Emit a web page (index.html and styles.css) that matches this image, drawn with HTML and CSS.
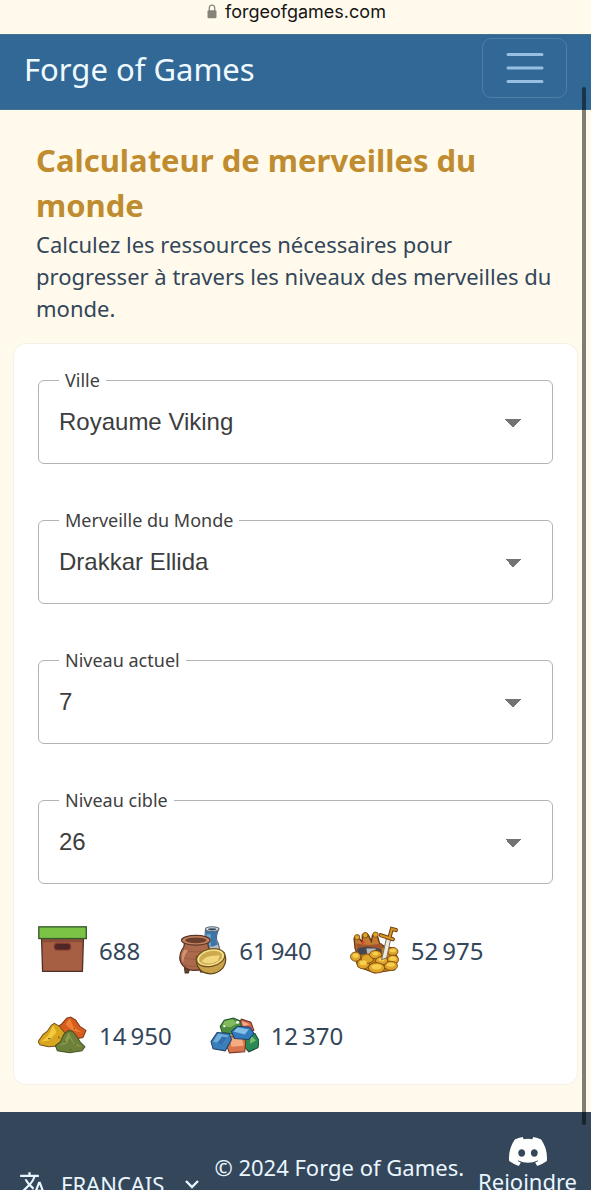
FILE: index.html
```html
<!DOCTYPE html>
<html lang="fr">
<head>
<meta charset="utf-8">
<meta name="viewport" content="width=device-width, initial-scale=1">
<title>Forge of Games</title>
<link rel="stylesheet" href="styles.css">
</head>
<body>
<div class="app">
  <div class="address">
    <svg class="lock" viewBox="0 0 10 15" aria-hidden="true"><path d="M2.3 7V4a2.7 2.9 0 0 1 5.400 0v3" fill="none" stroke="#8b8980" stroke-width="1.300"/><rect x="0.500" y="6.300" width="9" height="8" rx="1.300" fill="#858379"/></svg>
    <span>forgeofgames.com</span>
  </div>
  <header class="navbar">
    <a class="brand" href="#">Forge of Games</a>
    <button class="toggler" type="button" aria-label="Menu">
      <svg viewBox="0 0 38 30" aria-hidden="true"><path d="M2 1.500h34M2 15h34M2 28.500h34" fill="none" stroke="#98bfe2" stroke-width="3" stroke-linecap="round"/></svg>
    </button>
  </header>
  <main class="main">
    <div class="intro">
      <h1>Calculateur de merveilles du monde</h1>
      <p>Calculez les ressources nécessaires pour progresser à travers les niveaux des merveilles du monde.</p>
    </div>
    <section class="card">
      <form class="fields">
        <fieldset class="field"><legend><label for="city">Ville</label></legend><select id="city"><option>Royaume Viking</option></select></fieldset>
        <fieldset class="field"><legend><label for="wonder">Merveille du Monde</label></legend><select id="wonder"><option>Drakkar Ellida</option></select></fieldset>
        <fieldset class="field"><legend><label for="current">Niveau actuel</label></legend><select id="current"><option>7</option></select></fieldset>
        <fieldset class="field"><legend><label for="target">Niveau cible</label></legend><select id="target"><option>26</option></select></fieldset>
      </form>
      <ul class="costs">
        <li>
          <svg viewBox="0 0 48 48" aria-hidden="true"><path d="M3.500 12h41l-1 32.500h-39z" fill="#a65f43" stroke="#513029" stroke-width="1.300"/><path d="M4 13h40v3H4z" fill="#8b4c39"/><rect x=".8" y=".8" width="46.500" height="11.500" fill="#7bc345" stroke="#35552c" stroke-width="1.300"/><rect x="16" y="17" width="16" height="6.500" rx="3.200" fill="#4f2525" stroke="#813c32" stroke-width="1.200"/></svg>
          <span>688</span>
        </li>
        <li>
          <svg viewBox="0 0 48 48" aria-hidden="true">
            <path d="M27 3q-1 7 0 11-5 6-3 17 9 6 16-1 2-9-2-16-1-5 2-11z" fill="#b6bcc0" stroke="#5a5960"/><path d="M27 4q0 5 1 8-3 3-3 7 7 3 14-1l-2-5 2-9z" fill="#3b76ab"/><path d="M28 8h4v12h-4z" fill="#6fa7cf"/><ellipse cx="33.500" cy="3" rx="6.500" ry="2.300" fill="#d6dfe3" stroke="#5a6875"/><ellipse cx="33.500" cy="3.300" rx="4" ry="1" fill="#374758"/>
            <path d="m6 38 1 8h3l2-5m9 0 1 4h3v-6" fill="#68432f" stroke="#49301f"/><path d="M6 15q1 5-2 8-5 9 1 16 7 7 20 3 11-6 7-18-4-4-2-10z" fill="#ad694c" stroke="#553224" stroke-width="1.200"/><path d="M4 23q13 5 27 0M2 30q14 5 30 0M5 38q12 4 23-1" stroke="#985a40" fill="none"/><path d="M6 23q-4 7-1 13 1-8 5-12z" fill="#d09372"/><ellipse cx="17.500" cy="14" rx="14" ry="4.800" fill="#c68360" stroke="#583525" stroke-width="1.200"/><ellipse cx="17.500" cy="14" rx="10.500" ry="2.800" fill="#6a3f2d"/>
            <path d="M18 30q-1 10 6 15 12 5 20-4 5-7 1-15z" fill="#c9a24a" stroke="#604719" stroke-width="1.200"/><ellipse cx="32" cy="31" rx="14" ry="8.500" transform="rotate(-13 32 31)" fill="#f5e08b" stroke="#6f541d" stroke-width="1.200"/><ellipse cx="32" cy="31" rx="11.500" ry="6.500" transform="rotate(-13 32 31)" fill="#cda94e"/><path d="M23 35q4-7 18-6l-2 5q-8 5-16 1" fill="#f1d87f"/>
          </svg>
          <span>61&#8239;940</span>
        </li>
        <li>
          <svg viewBox="0 0 48 48" aria-hidden="true">
            <path d="m5 22-1-10q3-4 5 0l3 4V9q3-4 6 0l3 6 1-6q3-3 5 1l2 7 8 5v13L11 38z" fill="#c17b32" stroke="#633410" stroke-width="1.300"/>
            <path d="M3 27 10 24l26-4 7 2 4 10-3 11-20 3-16-6z" fill="#c17f1c" stroke="#6e3f0d"/>
            <path d="M6 17q13 3 25 0v8q-14-3-24 1z" fill="#a3542d"/><path d="M7 22q11-4 24 1v5q-12-3-22 1z" fill="#464650"/><path d="m16 22 9 0v5l-8 1z" fill="#b9babb"/>
            <g fill="#dfa42a" stroke="#7d4b10" stroke-width=".9"><circle cx="7" cy="11" r="2.600"/><circle cx="15" cy="9" r="2.600"/><circle cx="25" cy="8.500" r="2.600"/><ellipse cx="5.500" cy="30" rx="5" ry="4.500"/><ellipse cx="42" cy="25" rx="5" ry="4"/><ellipse cx="42" cy="33" rx="5.500" ry="4.500"/><ellipse cx="13" cy="37" rx="6" ry="5"/><ellipse cx="40" cy="39" rx="6.500" ry="4.500"/><ellipse cx="17" cy="32" rx="6" ry="4.500"/><ellipse cx="25" cy="28" rx="6" ry="4"/><ellipse cx="31" cy="34" rx="6" ry="4"/><ellipse cx="26" cy="41" rx="8" ry="5"/></g>
            <g fill="#f7cf4c"><ellipse cx="5.500" cy="29" rx="3" ry="2.300"/><ellipse cx="42" cy="32" rx="3.500" ry="2.200"/><ellipse cx="13" cy="36" rx="3.500" ry="2.500"/><ellipse cx="26" cy="40" rx="5" ry="2.500"/><ellipse cx="40" cy="38" rx="4" ry="2"/><ellipse cx="25" cy="27" rx="3" ry="1.800"/><ellipse cx="31" cy="33" rx="3" ry="1.700"/><ellipse cx="42" cy="24" rx="3" ry="1.800"/></g><circle cx="13" cy="16" r="1.500" fill="#e84235"/>
            <path d="m36 11 4 1-4 19-5 2z" fill="#eceae1" stroke="#7f7160"/><path d="m30 9 12 4M39 10l2-7 4 1" fill="none" stroke="#70400f" stroke-width="4" stroke-linecap="round"/><path d="m30 9 12 4M39 10l2-7 4 1" fill="none" stroke="#d99624" stroke-width="2" stroke-linecap="round"/>
          </svg>
          <span>52&#8239;975</span>
        </li>
        <li>
          <svg viewBox="0 0 48 48" aria-hidden="true">
            <path d="m17 17 6-4 5-6 4-1 5 3 4 6 6 4-3 7-16 3z" fill="#d75c20" stroke="#7e3918"/><path d="m31 7 4 9 8 5-9-2-7-6z" fill="#ef8133"/><path d="m0 30 5-7 4-3 4-6 3-2 5 3 5 6 4 9-7 4-13 1-8-2z" fill="#d9a51e" stroke="#79541b"/><path d="m15 14-5 10-7 6 8-1 7-8z" fill="#f4c83d"/><path d="m17 34 5-4 3-7 5-4 4 1 4 5 3 5 5 5-3 4-12 2-12-2z" fill="#6d803a" stroke="#465226"/><path d="m30 21-5 10-5 3 8-2 3-6 5 8 7 1-8-4z" fill="#8b9d4e"/><path d="m26 29 1 2m9 1 1 2m-6 4h2M10 27h2m8-2 1 2m14-10 1 1" stroke="#6a5e23" stroke-width="1.200"/>
          </svg>
          <span>14&#8239;950</span>
        </li>
        <li>
          <svg viewBox="0 0 48 48" aria-hidden="true">
            <path d="m27 12 4-4 9 3 3 8-7 4-10-5z" fill="#db6448" stroke="#693029"/><path d="m31 10 8 3-6 2z" fill="#f2ac8d"/><path d="m10 15 4-6 9-2 7 3 1 8-8 5-11-2z" fill="#4e8f3f" stroke="#23542b"/><path d="m14 10 8-2 5 4-7 4-8-1z" fill="#82bb5d"/><path d="m38 22 6 0 4 7-1 7-9 4-6-7z" fill="#2b8955" stroke="#194b35"/><path d="m40 24 5 5-6 3z" fill="#79bd6d"/><path d="m18 25 14-2 3 7-1 10-15 1-3-8z" fill="#d9744d" stroke="#743722"/><path d="m20 27 11-1 2 8-12 1z" fill="#f4ac80"/><path d="m1 30 6-9 12 1 2 6-6 11-12-2z" fill="#397fbc" stroke="#214268"/><path d="m8 22 10 2-5 8-10-2z" fill="#72aedc"/><path d="m12 33 5-7-5-1-5 6z" fill="#346fac"/><path d="m21 20 6-5 12 1 4 6-5 6-14-1z" fill="#347cc0" stroke="#1c3f69"/><path d="m27 16 11 2-4 5-11-3z" fill="#83bfe5"/><circle cx="27" cy="11" r="1.500" fill="#fff"/><circle cx="14" cy="15" r="1" fill="#fff"/>
          </svg>
          <span>12&#8239;370</span>
        </li>
      </ul>
    </section>
  </main>
  <footer class="footer">
    <button class="language" type="button">
      <svg class="translate" viewBox="0 0 24 24" aria-hidden="true"><path fill="currentColor" d="m12.870 15.070-2.540-2.510.030-.030A17.520 17.520 0 0 0 14.070 6H17V4h-7V2H8v2H1v2h11.170C11.500 7.920 10.440 9.750 9 11.350 8.070 10.320 7.300 9.190 6.690 8h-2c.73 1.630 1.730 3.170 2.980 4.560l-5.090 5.020L4 19l5-5 3.110 3.110.76-2.040zM18.500 10h-2L12 22h2l1.120-3h4.750L21 22h2l-4.500-12zm-2.620 7 1.620-4.330L19.120 17h-3.240z"/></svg>
      <span>FRANÇAIS</span>
      <svg class="chevron" viewBox="0 0 16 10" aria-hidden="true"><path d="m2 2 6 6 6-6" fill="none" stroke="currentColor" stroke-width="2.400"/></svg>
    </button>
    <p class="copyright">© 2024 Forge of Games.</p>
    <a class="discord" href="#">
      <svg viewBox="0 0 127.140 96.360" aria-hidden="true"><path fill="#fff" d="M107.700 8.070A105.150 105.150 0 0 0 81.470 0a72.060 72.060 0 0 0-3.360 6.830 97.680 97.680 0 0 0-29.110 0A72.370 72.370 0 0 0 45.640 0a105.890 105.890 0 0 0-26.250 8.090C2.790 32.650-1.710 56.600.54 80.210a105.730 105.730 0 0 0 32.170 16.150 77.700 77.700 0 0 0 6.890-11.110 68.420 68.420 0 0 1-10.850-5.180c.91-.66 1.800-1.340 2.660-2a75.570 75.570 0 0 0 64.320 0c.87.71 1.760 1.390 2.660 2a68.680 68.680 0 0 1-10.870 5.190 77 77 0 0 0 6.890 11.100 105.250 105.250 0 0 0 32.190-16.140c2.640-27.380-4.510-51.110-18.900-72.150zM42.450 65.690C36.180 65.690 31 60 31 53s5-12.740 11.430-12.740S54 46 53.890 53s-5.050 12.690-11.440 12.690zm42.240 0C78.410 65.690 73.250 60 73.250 53s5-12.740 11.440-12.740S96.230 46 96.120 53s-5.040 12.690-11.430 12.690z"/></svg>
      <span>Rejoindre</span>
    </a>
  </footer>
  <div class="scroll-thumb"></div>
</div>
</body>
</html>
```
FILE: styles.css
```css
* { box-sizing: border-box; }
body {
  margin: 0;
  background: #fffaec;
  color: #33465a;
  font-family: "Noto Sans", sans-serif;
}
.app {
  position: relative;
  height: 100vh;
  overflow: hidden;
}
.address {
  display: flex;
  justify-content: center;
  gap: 8px;
  height: 34px;
  padding-left: 2px;
  color: #151515;
  font: 18px/24px Inter, sans-serif;
}
.lock { width: 10px; height: 15px; margin-top: 4px; }
.navbar {
  display: flex;
  align-items: flex-start;
  justify-content: space-between;
  height: 76px;
  padding: 3px 24px 0;
  background: #316896;
  border-top: 1px solid #44718e;
  border-bottom: 1px solid #44718e;
}
.brand {
  color: #eefaff;
  font-size: 31px;
  line-height: 62px;
  text-decoration: none;
}
.toggler {
  display: grid;
  place-items: center;
  width: 85px;
  height: 60px;
  padding: 0;
  border: 1px solid #4b7fa5;
  border-radius: 9px;
  background: none;
}
.toggler svg { width: 38px; height: 30px; }
.main { padding: 28px 14px; }
.intro { padding: 0 16px 0 22px; margin-bottom: 20px; }
h1 {
  margin: 0;
  color: #c08c30;
  font-size: 31px;
  line-height: 45px;
}
.intro p {
  margin: 0;
  font-size: 22px;
  line-height: 32px;
}
.card {
  padding: 24px 24px;
  border-radius: 12px;
  background: #fff;
  box-shadow: 0 0 0 1px #f5f1ea;
}
.fields { display: grid; gap: 44px; }
.field {
  min-width: 0;
  margin: 0;
  padding: 0 0 5px;
  border: 1px solid #b3b3b3;
  border-radius: 6px;
}
legend {
  margin-left: 20px;
  padding: 0 6px;
  color: #404040;
  font-size: 18px;
  line-height: 24px;
}
.field select {
  display: block;
  width: 100%;
  height: 66px;
  padding: 0 20px 6px;
  appearance: none;
  border: 0;
  border-radius: 6px;
  background: conic-gradient(from -45deg at 50% 100%, #737373 90deg, transparent 0) right 31px top 27px / 16px 8px no-repeat;
  color: #3d3d3d;
  font: 24px/32px "Liberation Sans", sans-serif;
}
.costs {
  display: flex;
  flex-wrap: wrap;
  gap: 36px 38px;
  margin: 42px 0 0;
  padding: 0;
  list-style: none;
  font-size: 24px;
}
.costs li { display: flex; align-items: center; gap: 12px; height: 49px; }
.costs svg { width: 49px; height: 49px; }
.footer {
  display: flex;
  align-items: flex-start;
  justify-content: space-between;
  padding: 25px 14px 24px;
  background: #33465a;
  color: #eaf6ff;
  font-size: 22px;
  line-height: 30px;
}
.language {
  display: flex;
  align-items: center;
  gap: 14px;
  margin-top: 32px;
  padding: 0 0 0 5px;
  border: 0;
  background: none;
  color: inherit;
  font: inherit;
}
.translate { width: 28px; height: 28px; }
.chevron { width: 16px; height: 10px; margin-left: 6px; }
.copyright { margin: 15px 0 0; }
.discord {
  display: flex;
  flex-direction: column;
  align-items: center;
  color: inherit;
  text-decoration: none;
}
.discord svg { width: 38px; height: 29px; }
.scroll-thumb {
  position: absolute;
  top: 87px;
  right: 5px;
  width: 4px;
  height: 1038px;
  border-radius: 2px;
  background: rgb(0 0 0 / 50%);
}
```
